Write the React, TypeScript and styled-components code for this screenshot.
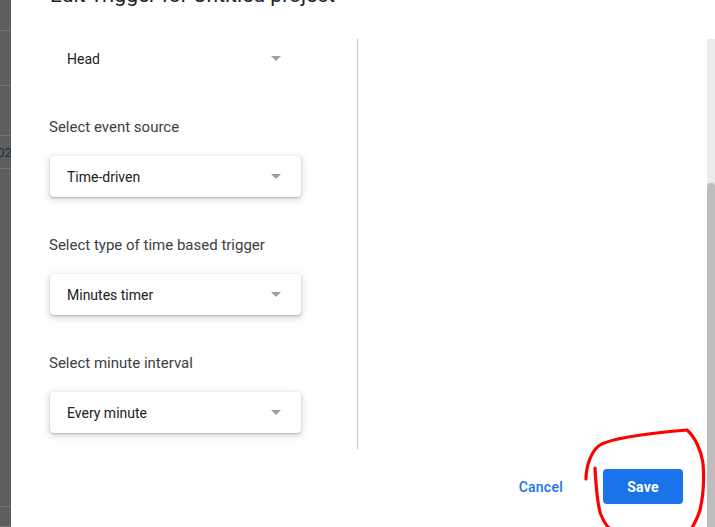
import styled, { createGlobalStyle } from "styled-components";

const GlobalStyle = createGlobalStyle`
  html, body {
    margin: 0;
    padding: 0;
    background: #5e5e5e;
    overflow: hidden;
  }
  body {
    font-family: Roboto, "Liberation Sans", Arial, sans-serif;
  }
`;

const fields = [
  { label: "Select event source", value: "Time-driven" },
  { label: "Select type of time based trigger", value: "Minutes timer" },
  { label: "Select minute interval", value: "Every minute" },
];

// rows of the dimmed spreadsheet peeking out on the left
const sheetRows = [
  { height: 31 },
  { height: 55 },
  { height: 50 },
  { height: 33, text: "2020" },
  { height: 338 },
  { height: 20 },
];

export default function App() {
  return (
    <Page>
      <GlobalStyle />
      <Backdrop>
        {sheetRows.map((r, i) => (
          <SheetRow key={i} $h={r.height}>
            {r.text}
          </SheetRow>
        ))}
      </Backdrop>

      <Dialog>
        <Main>
          <Header>
            <Title>Edit Trigger for Untitled project</Title>
          </Header>

          <Body>
            <LeftColumn>
              <Select $flat>
                <span>Head</span>
                <Caret />
              </Select>
              {fields.map((f) => (
                <Field key={f.label}>
                  <Label>{f.label}</Label>
                  <Select>
                    <span>{f.value}</span>
                    <Caret />
                  </Select>
                </Field>
              ))}
            </LeftColumn>
            <RightColumn />
          </Body>

          <Footer>
            <TextButton>Cancel</TextButton>
            <PrimaryButton>Save</PrimaryButton>
          </Footer>
        </Main>

        <Scrollbar>
          <Thumb />
        </Scrollbar>
      </Dialog>

      <Scribble width="135" height="102" viewBox="0 0 135 102">
        <path d="M6 54 C 6 40, 12 25, 20 20 C 30 14, 60 9, 107 5 C 115 12, 121 25, 123 38 C 124 50, 124 68, 120 85 C 118 92, 115 97, 112 103" />
        <path d="M15 43 C 16 60, 17 80, 21 90 C 23 95, 25 99, 29 103" />
      </Scribble>
    </Page>
  );
}

const Page = styled.div`
  position: relative;
  display: flex;
  width: 715px;
  height: 527px;
  overflow: hidden;
`;

const Backdrop = styled.div`
  width: 11px;
  flex-shrink: 0;
  display: flex;
  flex-direction: column;
  background: #5e5e5e;
  overflow: hidden;
`;

const SheetRow = styled.div<{ $h: number }>`
  height: ${(p) => p.$h}px;
  flex-shrink: 0;
  box-sizing: border-box;
  border-bottom: 1px solid #737373;
  display: flex;
  align-items: center;
  white-space: nowrap;
  text-indent: -10px;
  font-size: 13px;
  color: #1d2a4a;
`;

const Dialog = styled.div`
  flex: 1;
  display: flex;
  background: #fff;
`;

const Main = styled.div`
  flex: 1;
  display: flex;
  flex-direction: column;
`;

const Header = styled.div`
  height: 38px;
  padding-left: 39px;
  overflow: hidden;
  display: flex;
  align-items: flex-end;
`;

const Title = styled.h1`
  margin: 0 0 30px;
  font-size: 21px;
  font-weight: 400;
  line-height: 26px;
  color: #202124;
  white-space: nowrap;
`;

const Body = styled.div`
  height: 411px;
  display: flex;
`;

const LeftColumn = styled.div`
  width: 346px;
  box-sizing: border-box;
  padding-left: 39px;
  display: flex;
  flex-direction: column;
  gap: 38px;
`;

const RightColumn = styled.div`
  flex: 1;
  margin-top: 1px;
  border-left: 1px solid #c4c4c4;
`;

const Field = styled.div`
  display: flex;
  flex-direction: column;
  gap: 19px;
`;

const Label = styled.div`
  margin-left: -1px;
  font-size: 15px;
  line-height: 20px;
  color: #3c4043;
`;

const Select = styled.div<{ $flat?: boolean }>`
  width: 251px;
  height: 41px;
  box-sizing: border-box;
  padding: 0 20px 0 17px;
  display: flex;
  align-items: center;
  justify-content: space-between;
  border-radius: 4px;
  background: #fff;
  box-shadow: ${(p) =>
    p.$flat
      ? "none"
      : "0 1px 2px rgba(60,64,67,0.3), 0 2px 6px 2px rgba(60,64,67,0.15)"};
  font-size: 14px;
  color: #202124;
`;

const Caret = styled.span`
  width: 0;
  height: 0;
  border-left: 5.5px solid transparent;
  border-right: 5.5px solid transparent;
  border-top: 5.5px solid #9e9e9e;
`;

const Footer = styled.div`
  flex: 1;
  display: flex;
  justify-content: flex-end;
  align-items: flex-start;
  gap: 24px;
  padding: 20px 24px 0 0;
`;

const TextButton = styled.button`
  height: 35px;
  padding: 0 16px;
  border: none;
  background: none;
  font-family: Roboto, "Liberation Sans", Arial, sans-serif;
  font-size: 14px;
  font-weight: 500;
  letter-spacing: 0.25px;
  color: #1a73e8;
`;

const PrimaryButton = styled.button`
  width: 80px;
  height: 35px;
  border: none;
  border-radius: 4px;
  background: #1a73e8;
  font-family: Roboto, "Liberation Sans", Arial, sans-serif;
  font-size: 14px;
  font-weight: 700;
  letter-spacing: 0.25px;
  color: #fff;
`;

const Scrollbar = styled.div`
  width: 8px;
  margin-top: 39px;
  display: flex;
  flex-direction: column;
  justify-content: flex-end;
  background: #ececec;
`;

const Thumb = styled.div`
  height: 344px;
  border-radius: 4px 4px 0 0;
  background: #bdbdbd;
`;

const Scribble = styled.svg`
  position: absolute;
  left: 580px;
  top: 425px;
  overflow: visible;
  fill: none;
  stroke: #ff0000;
  stroke-width: 3.2;
  stroke-linecap: round;
  stroke-linejoin: round;
`;
